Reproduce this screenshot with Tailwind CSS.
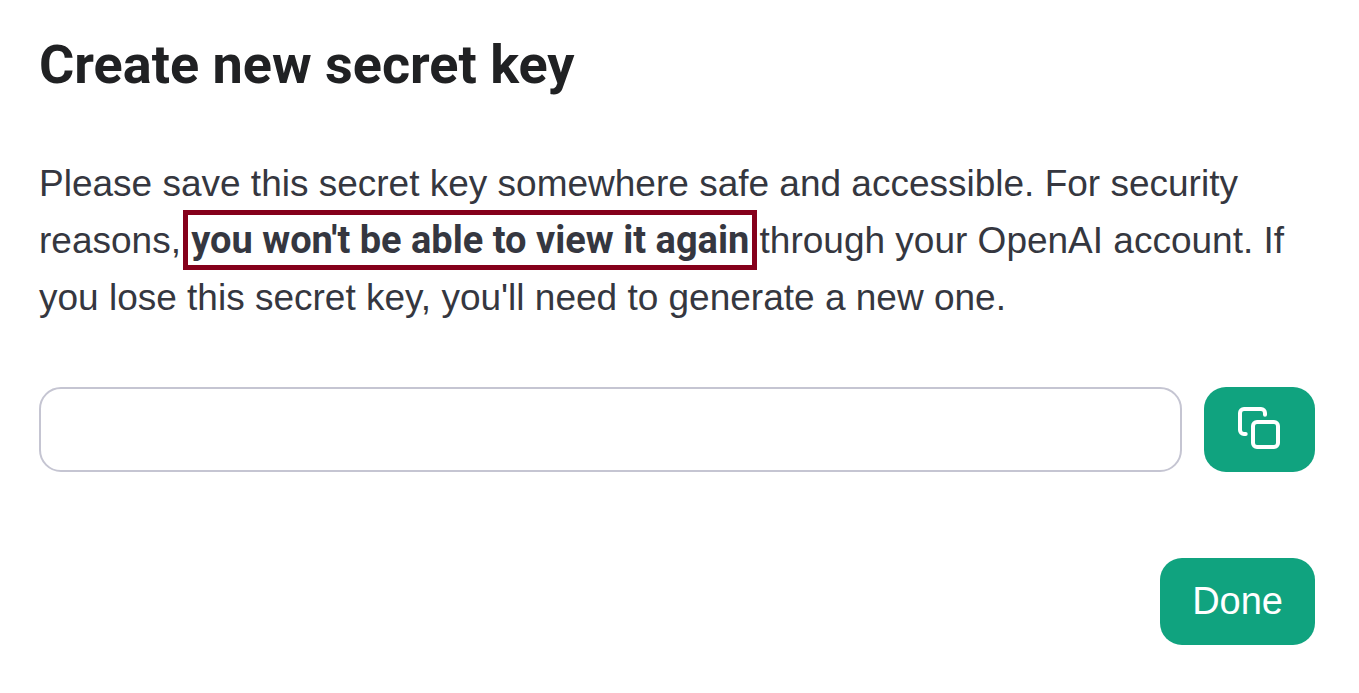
<!DOCTYPE html>
<html lang="en">
<head>
<meta charset="utf-8">
<meta name="viewport" content="width=device-width, initial-scale=1">
<title>Create new secret key</title>
<script src="https://cdn.jsdelivr.net/npm/@tailwindcss/browser@4"></script>
</head>
<body class="bg-white font-['Liberation_Sans',sans-serif]">
<main class="pl-[39px] pr-11 pt-8 pb-12">
  <h1 class="font-[Roboto,sans-serif] text-[54px] leading-[66px] font-bold text-[#202123]">Create new secret key</h1>
  <p class="mt-[57px] text-[37px] leading-[57px] text-[#353740]">Please save this secret key somewhere safe and accessible. For security reasons, <strong class="font-[Roboto,sans-serif] text-[38px] font-bold outline-5 outline-offset-3 outline-[#85001b]">you won't be able to view it again</strong> through your OpenAI account. If you lose this secret key, you'll need to generate a new one.</p>
  <div class="mt-[61px] flex gap-[22px]">
    <input type="text" aria-label="Secret key" readonly class="h-[85px] min-w-0 flex-1 rounded-[22px] border-2 border-[#c5c5d2] bg-white px-6 text-[38px] text-[#353740]">
    <button type="button" aria-label="Copy" class="flex h-[85px] w-[111px] items-center justify-center rounded-[22px] bg-[#10a37f] pr-px pb-[3px] text-white">
      <svg class="size-[42px]" viewBox="0 0 42 42" fill="none" stroke="currentColor" stroke-width="4" stroke-linecap="round" stroke-linejoin="round"><rect x="15" y="15" width="25" height="25" rx="4"/><path d="M7.7 27H6a4 4 0 0 1-4-4V6a4 4 0 0 1 4-4h17a4 4 0 0 1 4 4v1.7"/></svg>
    </button>
  </div>
  <div class="mt-[86px] flex justify-end">
    <button type="button" class="h-[87px] rounded-[22px] bg-[#10a37f] px-8 text-[38px] text-white">Done</button>
  </div>
</main>
</body>
</html>
